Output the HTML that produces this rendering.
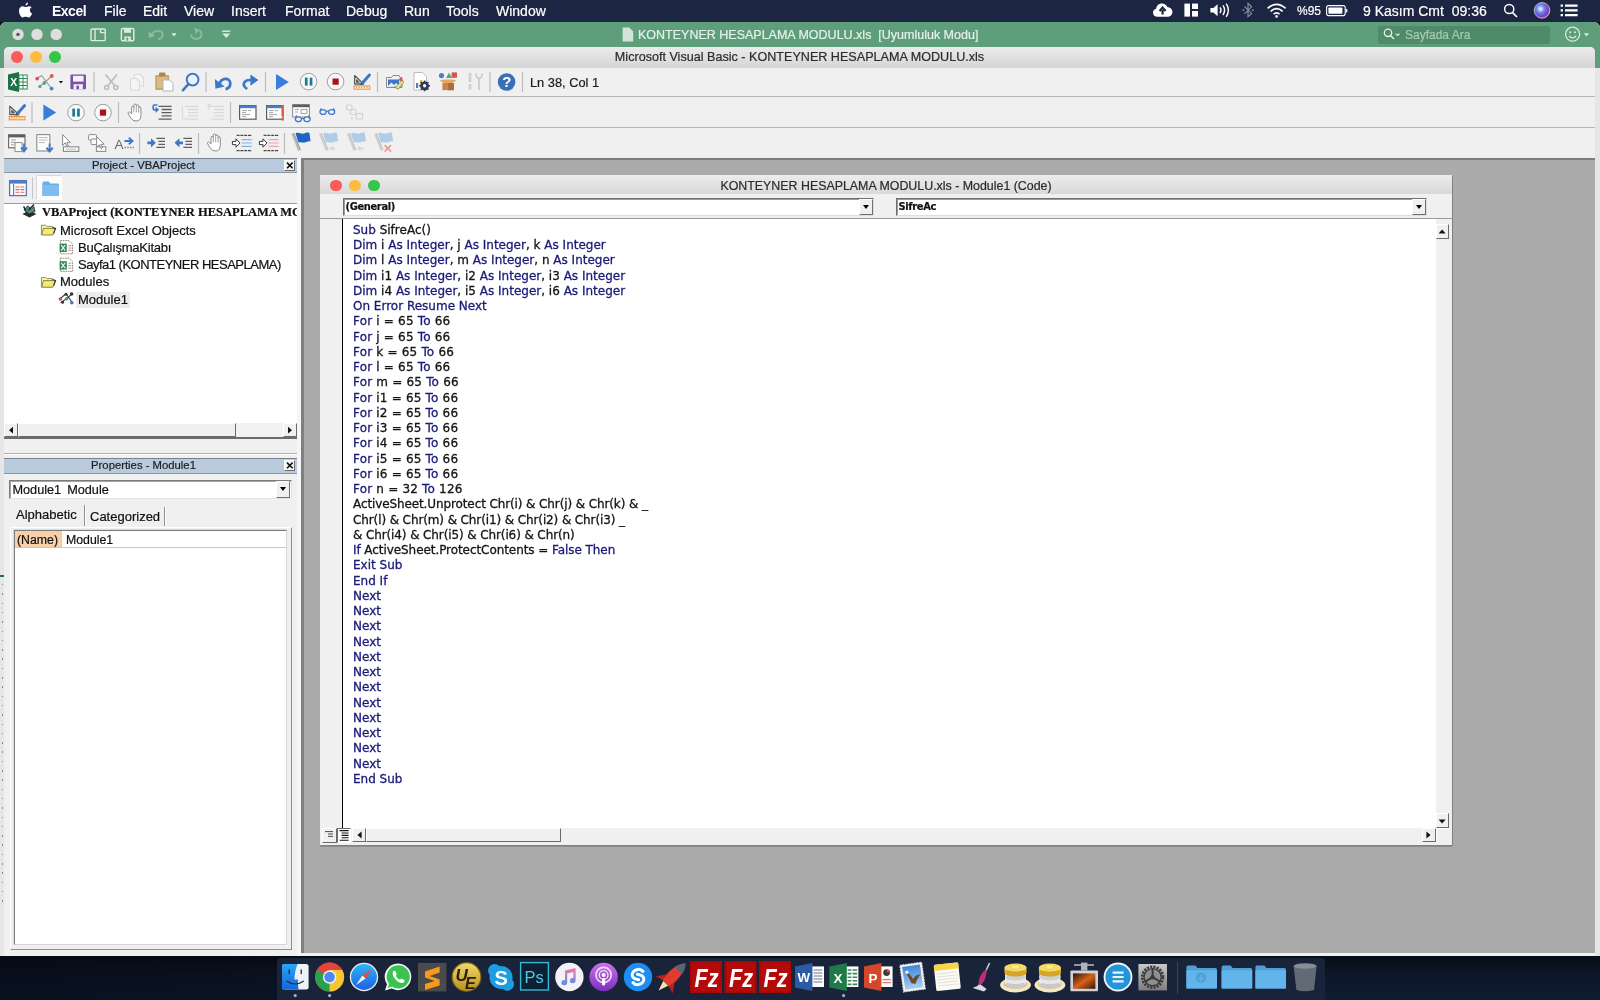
<!DOCTYPE html>
<html lang="tr">
<head>
<meta charset="utf-8">
<title>Microsoft Visual Basic - KONTEYNER HESAPLAMA MODULU.xls</title>
<style>
*{box-sizing:border-box;margin:0;padding:0}
html,body{width:1600px;height:1000px;overflow:hidden;background:#0d1a2c}
body{-webkit-text-stroke:.2px;position:relative;font-family:"Liberation Sans",sans-serif;font-size:13px;color:#1e1e1e}
#root{position:absolute;left:0;top:0;width:1600px;height:1000px;will-change:transform;background:linear-gradient(90deg,rgba(5,7,16,.55),rgba(5,7,16,0) 65%),linear-gradient(#0a1220 0,#0a1220 955px,#070d19 957px,#0c1829 975px,#0f1d32 1000px)}
.abs{position:absolute}
svg{position:absolute;left:0;top:0;overflow:visible}
svg text{font-family:"Liberation Sans",sans-serif}
/* ---------- mac menu bar ---------- */
#menubar{position:absolute;left:0;top:0;width:1600px;height:22px;background:#1c2541;color:#fff;font-size:14px}
#menubar span{position:absolute;top:2px;line-height:18px;white-space:nowrap}
/* ---------- excel window (behind) ---------- */
#xl{position:absolute;left:0;top:22px;width:1600px;height:934px;background:#e6e6e6;border-radius:6px 6px 0 0;overflow:hidden}
#xltitle{position:absolute;left:0;top:0;width:1600px;height:46px;background:#5f9e7a}
#xltitle .t{position:absolute;top:5px;left:638px;font-size:12.5px;color:#e6f1ea;white-space:nowrap;line-height:16px}
#xlsearch{position:absolute;left:1378px;top:4px;width:172px;height:18px;border-radius:3px;background:#4f8a69;color:#a5cbb4;font-size:12px;line-height:18px;padding-left:27px}
/* ---------- VB window ---------- */
#vb{position:absolute;left:4px;top:47px;width:1591px;height:909px;background:#f0f0f0;border-radius:5px 5px 0 0;overflow:hidden}
#vbtitle{position:absolute;left:0;top:0;width:100%;height:21px;background:linear-gradient(#ebebeb,#d5d5d5)}
#vbtitle .t{position:absolute;left:0;width:100%;text-align:center;top:3px;font-size:12.6px;color:#2b2b2b;line-height:15px}
.tl{position:absolute;width:12px;height:12px;border-radius:50%}
.tbsep{position:absolute;left:4px;width:1591px;height:1px;background:#b4b4b4}
#mdi{position:absolute;left:301px;top:158px;width:1294px;height:795px;background:#ababab;border-top:2px solid #7d7d7d;border-left:3px solid #7f7f7f}
/* ---------- panels ---------- */
.ptitle{position:absolute;left:4px;width:293px;padding-right:14px;height:15px;background:#b8cadc;border-top:1px solid #76828f;border-bottom:1px solid #8797a8;font-size:11.3px;text-align:center;line-height:13px;color:#1c1c1c}
.pclose{position:absolute;width:11px;height:11px;background:#f3f3f3;border:1px solid #fff;border-right-color:#6e6e6e;border-bottom-color:#6e6e6e}
.btn3d{position:absolute;background:#f0f0f0;border:1px solid #fff;border-right-color:#6a6a6a;border-bottom-color:#6a6a6a}
.tree{position:absolute;white-space:nowrap;font-size:13px;line-height:16px;color:#111}
/* ---------- code window ---------- */
#cw{position:absolute;left:320px;top:175px;width:1132px;height:670px;background:#f0f0f0;box-shadow:1px 1px 0 #808080,0 2px 0 #8c8c8c}
#cwtitle{position:absolute;left:0;top:0;width:100%;height:19px;background:linear-gradient(#ececec,#d9d9d9)}
#cwtitle .t{position:absolute;left:0;width:100%;text-align:center;top:4px;font-size:12.4px;color:#2b2b2b;line-height:15px;padding-left:0}
.combo{position:absolute;height:18px;background:#fff;border:1px solid #6f6f6f;border-right-color:#dedede;border-bottom-color:#dedede;box-shadow:inset 1px 1px 0 #9c9c9c;font:bold 11px "DejaVu Sans Condensed","DejaVu Sans","Liberation Sans",sans-serif;line-height:15px;padding-left:1.5px;letter-spacing:-.35px;color:#111}
.cbtn{position:absolute;width:14px;height:16px;background:#f0f0f0;border:1px solid #fff;border-right-color:#6f6f6f;border-bottom-color:#6f6f6f}
.cbtn:after{content:"";position:absolute;left:2.5px;top:5px;border:3.5px solid transparent;border-top:4px solid #000;border-bottom:0}
#code{position:absolute;left:22px;top:44px;width:1094px;height:609px;background:#fff;border-left:1px solid #000}
#code pre{-webkit-text-stroke:.3px;position:absolute;left:10px;top:3.75px;font-family:"DejaVu Sans","Liberation Sans",sans-serif;font-size:12px;line-height:15.25px;color:#141414;white-space:pre}
#code pre .w{letter-spacing:.19px}
#code pre .n{letter-spacing:-.11px}
#code pre .n2{letter-spacing:-.07px}
#code pre b{font-weight:normal;color:#1a1a78}
</style>
</head>
<body>
<div id="root">
<!-- MENUBAR -->
<div id="menubar">
<span style="left:52px;font-weight:bold;letter-spacing:-.5px;-webkit-text-stroke:0">Excel</span>
<span style="left:104px">File</span>
<span style="left:143px">Edit</span>
<span style="left:184px">View</span>
<span style="left:231px">Insert</span>
<span style="left:285px">Format</span>
<span style="left:346px">Debug</span>
<span style="left:404px">Run</span>
<span style="left:446px">Tools</span>
<span style="left:496px">Window</span>
<span style="left:1297px;font-size:12px">%95</span>
<span style="left:1363px">9 Kasım Cmt&nbsp; 09:36</span>
</div>
<!-- MENUBAR + EXCEL TITLE ICONS -->
<svg width="1600" height="70" viewBox="0 0 1600 70" style="z-index:2">
<!-- apple -->
<path d="M29.200 6.200 C27.800 6.200 26.600 7.100 25.800 7.100 C25 7.100 23.900 6.300 22.700 6.300 C20.900 6.300 19 7.800 19 10.900 C19 13.800 21.100 17.500 22.700 17.500 C23.600 17.500 24.300 16.800 25.700 16.800 C27.100 16.800 27.500 17.500 28.600 17.500 C30.100 17.500 31.600 14.800 32.100 13.400 C30.600 12.800 29.900 11.500 29.900 10.200 C29.900 8.900 30.600 7.800 31.700 7.200 C31 6.500 30.100 6.200 29.200 6.200 Z M28 2.600 C28.100 3.900 27 5.500 25.500 5.600 C25.300 4.200 26.600 2.800 28 2.600 Z" fill="#fff"/>
<!-- cloud upload -->
<path d="M1157.500 16.800 C1154.800 16.800 1153 15 1153 12.700 C1153 10.700 1154.400 9.200 1156.200 8.800 C1156.400 5.600 1158.800 3.400 1161.900 3.400 C1164.400 3.400 1166.400 4.800 1167.300 6.900 C1170.200 7 1172.400 9.100 1172.400 11.900 C1172.400 14.700 1170.200 16.800 1167.400 16.800 Z" fill="#fff"/><path d="M1162.600 14.600v-4.600 M1159.600 11 L1162.600 7.600 L1165.600 11" fill="none" stroke="#1c2541" stroke-width="2.200"/>
<!-- layout -->
<rect x="1184.400" y="3.600" width="5.600" height="13" fill="#fff"/><rect x="1192" y="3.600" width="6" height="5.400" fill="#fff"/><rect x="1192" y="11" width="6" height="5.600" fill="#fff"/>
<!-- volume -->
<path d="M1210.400 8h3l4.200-3.800v12l-4.200-3.800h-3z" fill="#fff"/><path d="M1220 7.400 Q1222 10.200 1220 13 M1223 5.400 Q1226.200 10.200 1223 15 M1226.200 3.600 Q1230.600 10.200 1226.200 16.800" fill="none" stroke="#fff" stroke-width="1.400"/>
<!-- bluetooth dim -->
<path d="M1244.400 6.400 L1251.600 13.400 L1248 16.800 L1248 3.400 L1251.600 6.800 L1244.400 13.800" fill="none" stroke="#8d93a3" stroke-width="1.100"/><circle cx="1243.400" cy="10.200" r=".9" fill="#8d93a3"/><circle cx="1252.800" cy="10.200" r=".9" fill="#8d93a3"/>
<!-- wifi -->
<g fill="none" stroke="#fff" stroke-width="1.700"><path d="M1267.600 8.400 Q1276.600 0.400 1285.600 8.400"/><path d="M1270.600 11.400 Q1276.600 6 1282.600 11.400"/><path d="M1273.600 14.200 Q1276.600 11.600 1279.600 14.200"/></g><circle cx="1276.600" cy="16.400" r="1.300" fill="#fff"/>
<!-- battery -->
<rect x="1326.600" y="5.600" width="18.600" height="10" rx="2" fill="none" stroke="#fff" stroke-width="1.100"/><rect x="1328.400" y="7.400" width="14" height="6.400" rx=".8" fill="#fff"/><path d="M1346.600 9v3.400" stroke="#fff" stroke-width="1.400"/>
<!-- search -->
<circle cx="1509.200" cy="9" r="4.600" fill="none" stroke="#fff" stroke-width="1.500"/><path d="M1512.600 12.600 L1517 17" stroke="#fff" stroke-width="1.700"/>
<!-- siri -->
<defs><radialGradient id="siri" cx=".4" cy=".4" r=".7"><stop offset="0" stop-color="#fff"/><stop offset=".35" stop-color="#6a8cf0"/><stop offset=".7" stop-color="#7a3bc4"/><stop offset="1" stop-color="#e0558d"/></radialGradient></defs>
<circle cx="1542" cy="10.400" r="7.800" fill="url(#siri)" stroke="#d9c6ea" stroke-width=".8"/>
<!-- list -->
<path d="M1565 5.600h12.600M1565 10.400h12.600M1565 15.200h12.600" stroke="#fff" stroke-width="2.200"/><path d="M1560.600 5.600h2.400M1560.600 10.400h2.400M1560.600 15.200h2.400" stroke="#fff" stroke-width="2.200"/>
<!-- excel traffic lights -->
<circle cx="18" cy="34.400" r="5.700" fill="#dedede"/><circle cx="18" cy="34.400" r="1.700" fill="#5e4a55"/><circle cx="37" cy="34.400" r="5.700" fill="#dedede"/><circle cx="56.200" cy="34.400" r="5.700" fill="#dedede"/>
<!-- excel qat icons -->
<g fill="none" stroke="#dcebe1" stroke-width="1.400"><rect x="91" y="29" width="14.200" height="11.600" rx="1.200"/><path d="M95 29v11.600 M100.600 29.200v3.400h4.200"/></g>
<rect x="121.400" y="28.600" width="12.400" height="12.200" rx="1.400" fill="none" stroke="#dcebe1" stroke-width="1.500"/><rect x="124" y="28.800" width="7" height="4" fill="#dcebe1"/><rect x="124.400" y="36.400" width="6.400" height="4.400" fill="#dcebe1"/><rect x="126.400" y="37.600" width="1.800" height="3" fill="#5f9e7a"/>
<g fill="none" stroke="#8cbba0" stroke-width="1.800"><path d="M152 35 C153 29.600 162.400 29.400 162.600 34.600 C162.800 37.400 160.600 38.800 158 39.200"/><path d="M190.800 34.400 C190.400 39.800 200.600 40.600 201.400 35 C201.800 32.400 200.400 30.600 198.400 30"/></g><path d="M148.400 31 L149 38 L155 36 Z" fill="#8cbba0"/><path d="M194.400 27.400 L199.600 30 L195.600 34 Z" fill="#8cbba0"/>
<path d="M171.400 33.200h5.200l-2.600 3.200z" fill="#dcebe1"/>
<path d="M222.200 31.200h8.200" stroke="#dcebe1" stroke-width="1.400"/><path d="M222.200 33.600h8.200l-4.100 4.400z" fill="#dcebe1"/>
<!-- doc icon -->
<path d="M622.600 27.600h6.800l3.800 3.800v10h-10.600z" fill="#cfe3d7"/>
<!-- search icon in box -->
<circle cx="1388" cy="32.800" r="3.700" fill="none" stroke="#e6f1ea" stroke-width="1.300"/><path d="M1390.600 35.600 L1394 39" stroke="#e6f1ea" stroke-width="1.400"/><path d="M1395.600 33.600 L1397.600 35.400 L1399.600 33.600" fill="none" stroke="#e6f1ea" stroke-width="1.100"/>
<!-- smiley -->
<circle cx="1572.600" cy="34.200" r="7" fill="none" stroke="#dcebe1" stroke-width="1.300"/><circle cx="1570.200" cy="32.200" r="1" fill="#dcebe1"/><circle cx="1575" cy="32.200" r="1" fill="#dcebe1"/><path d="M1569 36 Q1572.600 39.800 1576.200 36" fill="none" stroke="#dcebe1" stroke-width="1.200"/><path d="M1584 33.200h5l-2.500 3.200z" fill="#dcebe1"/>
</svg>
<!-- EXCEL WINDOW BEHIND -->
<div id="xl">
<div id="xltitle"><div class="t">KONTEYNER HESAPLAMA MODULU.xls&nbsp; [Uyumluluk Modu]</div>
<div id="xlsearch">Sayfada Ara</div>
</div>
<div class="abs" style="left:0;top:553px;width:4px;height:2px;background:#2f6b4f"></div>
<div class="abs" style="left:2px;top:562px;width:1px;height:322px;background:repeating-linear-gradient(#8a8a8a 0,#8a8a8a 1.5px,transparent 1.5px,transparent 9.3px)"></div>
</div>
<!-- VB WINDOW -->
<div id="vb">
<div id="vbtitle"><div class="t">Microsoft Visual Basic - KONTEYNER HESAPLAMA MODULU.xls</div>
<div class="tl" style="left:7px;top:4px;background:#fc5b57"></div>
<div class="tl" style="left:26px;top:4px;background:#fdbc40"></div>
<div class="tl" style="left:45px;top:4px;background:#33c748"></div>
</div>
</div>
<div class="tbsep" style="top:96px"></div>
<div class="tbsep" style="top:127px"></div>
<div id="mdi"></div>
<div class="abs" style="left:530px;top:75.3px;font-size:12.8px;line-height:15px;color:#1a1a1a;white-space:nowrap">Ln 38, Col 1</div>
<!-- TOOLBAR ICONS -->
<svg width="1600" height="1000" viewBox="0 0 1600 1000" style="z-index:3">
<defs>
<g id="i-design"><path d="M1.6 2.6 L1.6 11 L10.6 11 Z M3.6 7 L3.6 9.2 L6 9.2 Z" fill="none" stroke="#5e5e5e" stroke-width="1.3" stroke-linejoin="round"/><path d="M9 10.4 L16.4 2" stroke="#3f77c6" stroke-width="3" stroke-linecap="round"/><path d="M7.2 12 L8 9.6 L9.8 11.2 Z" fill="#444"/><rect x="1" y="12.9" width="15.8" height="3.3" fill="#fde9cf" stroke="#e8923a" stroke-width="1"/><path d="M3.6 13.4v1.6M6.200 13.400v1.600M8.800 13.400v1.600M11.400 13.400v1.600M14 13.400v1.600" stroke="#e8923a" stroke-width=".9"/></g>
<g id="i-run"><path d="M0 0 L12.8 8 L0 16 Z" fill="#3b7ddb"/></g>
<g id="i-pause"><circle cx="8.6" cy="8.6" r="8.3" fill="#f8f8f8" stroke="#9d9d9d" stroke-width="1"/><rect x="4.9" y="4.6" width="2.7" height="8" fill="#1c7d92"/><rect x="9.7" y="4.6" width="2.7" height="8" fill="#1c7d92"/></g>
<g id="i-stop"><circle cx="8.6" cy="8.6" r="8.3" fill="#f8f8f8" stroke="#9d9d9d" stroke-width="1"/><rect x="5.5" y="5.5" width="6.2" height="6.2" fill="#a5141e"/></g>
<g id="i-hand"><path d="M4.2 10.5 L4.2 4.2 Q4.2 2.8 5.4 2.8 Q6.5 2.8 6.5 4.2 L6.5 2 Q6.5 .6 7.7 .6 Q8.9 .6 8.9 2 L8.9 2.6 Q8.9 1.4 10.1 1.4 Q11.3 1.4 11.3 2.8 L11.3 4.4 Q11.3 3.4 12.4 3.4 Q13.5 3.4 13.5 4.8 L13.5 12 Q13.5 17.6 8.6 17.6 Q5.2 17.6 3.4 14.6 L.9 10.4 Q.3 9.2 1.3 8.6 Q2.3 8.2 3 9.2 Z" fill="#fff" stroke="#8a8a8a" stroke-width="1"/><path d="M6.5 4v5M8.9 2.6v6.4M11.3 4.4v4.8" stroke="#9a9a9a" stroke-width=".9"/></g>
<g id="i-lines"><path d="M0 .7h13M3 3.9h10M3 7.1h10M3 10.3h10M0 13.5h13" stroke-width="1.3"/></g>
<g id="i-win"><rect x=".6" y=".6" width="16.4" height="13.6" fill="#fff" stroke="#5a5a5a" stroke-width="1.2"/><rect x=".6" y=".6" width="16.4" height="2.6" fill="#4a7fc3"/><path d="M3 5.6h5M3 7.6h4M3 9.6h6M3 11.6h4M9 5.6h3M9 9.6h2" stroke="#9a9a9a" stroke-width=".9"/></g>
<g id="i-glasses"><ellipse cx="3.8" cy="4.6" rx="3.1" ry="2.4" fill="#eef4fb" stroke="#3f77c6" stroke-width="1.3"/><ellipse cx="12.4" cy="4.6" rx="3.1" ry="2.4" fill="#eef4fb" stroke="#3f77c6" stroke-width="1.3"/><path d="M6.9 4.2 Q8.1 3.2 9.3 4.2 M.9 3.6 L2 .8 M15.3 3.6 L14.2 .8" fill="none" stroke="#3f77c6" stroke-width="1.2"/></g>
<g id="i-flag"><path d="M1.6 1.5 L8.3 18.5" stroke="#b9b9b9" stroke-width="2.6"/><path d="M1.6 1.5 L8.3 18.5" stroke="#8a8a8a" stroke-width=".8" transform="translate(1.2,-.4)"/></g>
</defs>
<!-- toolbar 1 -->
<g>
<path d="M19 72 L8 74.4 L8 89.6 L19 92 Z" fill="#1e7145"/><rect x="19" y="75" width="8.2" height="14" fill="#fff" stroke="#2f8a57" stroke-width="1"/><path d="M19 78.5h8M19 82h8M19 85.5h8M23 75v14" stroke="#2f8a57" stroke-width="1"/>
<text x="10.2" y="86.2" font-size="10.5" font-weight="bold" fill="#fff">X</text>
<path d="M37 78.5 L41.5 75.5 L51.5 88.5 M38 87 L44.5 83 L52 75.5" fill="none" stroke="#9c9c9c" stroke-width="1.2"/><circle cx="37.2" cy="78.6" r="1.9" fill="#e0564f"/><circle cx="51.8" cy="76" r="1.9" fill="#e0564f"/><circle cx="44.3" cy="83" r="1.9" fill="#4aa6a0"/><circle cx="40" cy="86.5" r="1.6" fill="#4aa6a0"/><circle cx="51.6" cy="88.6" r="1.9" fill="#4a7fc3"/>
<path d="M58.8 81 L63 81 L60.9 83.6 Z" fill="#111"/>
<rect x="70.4" y="74.4" width="15.6" height="14.8" rx="1" fill="#7a53a6"/><rect x="73" y="75.8" width="10.6" height="5.8" fill="#f4effa"/><rect x="73.6" y="84.2" width="9.2" height="5" fill="#f4effa"/><rect x="76.4" y="85.6" width="2.6" height="3.6" fill="#7a53a6"/>
<path d="M94 72v20M206 72v20M265.5 72v20M377.5 72v20M490 72v20M522.5 72v20" stroke="#bcbcbc" stroke-width="1.2"/>
<g fill="none" stroke="#b9b9b9" stroke-width="1.5"><path d="M105.5 74.5 L115 86 M117 74.5 L107.5 86"/><circle cx="106.6" cy="87.6" r="2"/><circle cx="115.8" cy="87.6" r="2"/></g>
<g fill="#f4f4f4" stroke="#dadada" stroke-width="1.1"><path d="M134.5 74.5h6l3 3v8.5h-9z"/><path d="M130.5 78.5h6l3 3v8.5h-9z"/></g>
<rect x="155.2" y="75" width="14" height="15" rx="1" fill="#c9a76c"/><rect x="159" y="72.4" width="6.4" height="4" rx="1" fill="#a4884f"/><rect x="157" y="77" width="10.4" height="11" fill="#d9bc85"/><path d="M163 80h6.5l3.5 3.5v7.5h-10z" fill="#fff" stroke="#b4b4b4" stroke-width="1"/>
<circle cx="192.6" cy="79.6" r="5.9" fill="#ecf3fc" stroke="#3f77c6" stroke-width="2"/><path d="M188.4 84.2 L183 90.2" stroke="#3f77c6" stroke-width="2.6" stroke-linecap="round"/>
<path d="M219.5 84.5 C220.5 77.5 230 76.8 230.3 83.2 C230.5 86.4 228.6 88.2 225.6 89.2" fill="none" stroke="#3b78cb" stroke-width="2.7"/><path d="M214.8 79 L215.4 88.8 L224.6 86.6 Z" fill="#3b78cb"/>
<path d="M252 80.2 C244.5 79 240.6 84.6 247.2 89" fill="none" stroke="#3b78cb" stroke-width="2.7"/><path d="M250.4 74.4 L258.4 80 L250.4 85.8 Z" fill="#3b78cb"/>
<use href="#i-run" x="276" y="74"/>
<use href="#i-pause" x="300" y="73"/>
<use href="#i-stop" x="327" y="73"/>
<use href="#i-design" x="353" y="73"/>
<!-- project explorer -->
<path d="M386.5 77.5h5l1.5-2h6l1 2h2v10h-15.5z" fill="#f2f2f2" stroke="#8a8a8a" stroke-width="1"/><rect x="388" y="79.5" width="11" height="7.5" fill="#3f77c6"/><path d="M388 86 L391.5 82.5 L394 85 L396.5 83 L399 86.5 L388 87 Z" fill="#eaf1fa"/><path d="M395 87.5 L402.5 80 L403.5 82.5 L398.5 89 Z" fill="#f0e28a" stroke="#66863f" stroke-width=".8"/><circle cx="400.6" cy="79.5" r="1.6" fill="#d9534a"/>
<!-- properties -->
<path d="M414 72.5h8.5l4 4v13.5h-12.5z" fill="#fff" stroke="#bdbdbd" stroke-width="1"/><rect x="416" y="83" width="2.2" height="5" fill="#4a7fc3"/><rect x="420" y="80" width="2.2" height="8" fill="#e6b93e"/><circle cx="424.6" cy="85.8" r="4.4" fill="#2e3a5e"/><circle cx="424.6" cy="85.8" r="1.7" fill="#f2f2f2"/><path d="M424.6 80.4v10.8M419.2 85.8h10.8M420.8 82l7.6 7.6M428.4 82l-7.6 7.6" stroke="#2e3a5e" stroke-width="1.5"/><circle cx="424.6" cy="85.8" r="1.7" fill="#f2f2f2"/>
<!-- object browser -->
<circle cx="441.5" cy="75.6" r="2.6" fill="#4a7fc3"/><path d="M446 78 L449 72.6 L452 78 Z" fill="#59a86b"/><rect x="451.6" y="72.4" width="5.4" height="5.4" fill="#d9534a"/><path d="M439.5 80.5 L444 83 L452 83 L456.5 80.5 L452 79.5 L444 79.5Z" fill="#e7a661"/><rect x="442.4" y="83" width="11.6" height="7.2" fill="#c8854f"/><rect x="448.2" y="83" width="5.8" height="7.2" fill="#a96c3d"/>
<!-- tools disabled -->
<g stroke="#cfcfcf" fill="none"><path d="M470 73v9" stroke-width="2.6"/><path d="M470 84v5.5" stroke-width="2.8"/><path d="M476 73.5 C475.6 77 478 78.4 479 78.6 L479 90" stroke-width="2"/><path d="M482 73.5 C482.4 77 480 78.4 479 78.6" stroke-width="2"/></g>
<!-- help -->
<circle cx="506.6" cy="82" r="8.8" fill="#3b70b7"/><text x="502.2" y="87.4" font-size="15" font-weight="bold" fill="#fff">?</text>
</g>
<!-- toolbar 2 -->
<g>
<use href="#i-design" x="8.2" y="103.6"/>
<path d="M32 102v21M118.5 102v21M230.5 102v21" stroke="#bcbcbc" stroke-width="1.2"/>
<use href="#i-run" x="43.4" y="104.6"/>
<use href="#i-pause" x="67.4" y="104"/>
<use href="#i-stop" x="94.4" y="104"/>
<use href="#i-hand" x="127.4" y="103.4"/>
<use href="#i-lines" x="158.6" y="105.6" stroke="#5e5e5e"/><path d="M157.4 105 L154.4 105 Q153.2 105 153.2 106.2 L153.2 108.4 Q153.2 109.8 154.6 109.8 L156 109.8" fill="none" stroke="#3f77c6" stroke-width="1.7"/><path d="M155.6 106.8 L159.2 109.8 L155.6 112.8Z" fill="#3f77c6"/>
<use href="#i-lines" x="185" y="105.6" stroke="#d9d9d9"/><path d="M182.4 105.5v13h2.5" fill="none" stroke="#d4dbe4" stroke-width="1.1"/>
<use href="#i-lines" x="211" y="105.6" stroke="#d9d9d9"/><path d="M209 110.5v-5h2" fill="none" stroke="#d4dbe4" stroke-width="1.1"/><circle cx="209" cy="105.4" r="1.3" fill="none" stroke="#d4dbe4"/>
<use href="#i-win" x="239" y="105"/>
<use href="#i-win" x="266" y="105"/><rect x="281.4" y="105.4" width="2.4" height="11" fill="#e2603c"/><rect x="281.4" y="118" width="2.4" height="2.6" fill="#e2603c"/>
<rect x="292.6" y="104.6" width="16.8" height="12.4" fill="#fafafa" stroke="#8e8e8e" stroke-width="1"/><rect x="292.6" y="104.6" width="16.8" height="2.6" fill="#5e5e5e"/><path d="M295 109.5h4M295 112h3M301 109.5h6v4h-6z" fill="none" stroke="#9a9a9a" stroke-width=".9"/><use href="#i-glasses" x="294.6" y="114.6"/>
<use href="#i-glasses" x="319.2" y="107.4"/>
<g fill="none" stroke="#d2d2d2" stroke-width="1.1"><rect x="346.5" y="105" width="5.5" height="5" rx="1"/><rect x="350.5" y="109.5" width="5.5" height="5" rx="1"/><rect x="356" y="113.5" width="6.5" height="5.5"/><path d="M352 117v3"/></g>
</g>
<!-- toolbar 3 -->
<g>
<rect x="8.6" y="134.8" width="16.4" height="13" fill="#fafafa" stroke="#6e6e6e" stroke-width="1.2"/><rect x="8.6" y="134.8" width="16.4" height="2.6" fill="#5e5e5e"/><path d="M11 140h5M11 142.4h4M11 144.8h3" stroke="#9a9a9a" stroke-width=".9"/><rect x="15" y="142.6" width="7" height="9" fill="#fff" stroke="#8a8a8a" stroke-width="1"/><path d="M24 143.5v7 M21 147.5 L24 151.4 L27 147.5" fill="none" stroke="#3f77c6" stroke-width="1.8"/>
<rect x="36.8" y="134.6" width="13" height="16.4" fill="#fdfdfd" stroke="#8a8a8a" stroke-width="1.1"/><path d="M39 137.5h8.6M39 140h8.6M39 142.5h6" stroke="#b5b5b5" stroke-width=".9"/><path d="M49.6 143.6v7 M46.4 147.6 L49.6 151.6 L52.8 147.6" fill="none" stroke="#3f77c6" stroke-width="1.9"/>
<path d="M62.6 134.6 L62.6 145.4 L65.2 142.8 L67 146.6 L68.4 146 L66.8 142.4 L70.2 142.2 Z" fill="#fff" stroke="#8a8a8a" stroke-width="1"/><rect x="63.4" y="146.8" width="15.4" height="4.6" fill="#fafafa" stroke="#8a8a8a" stroke-width="1.1"/><path d="M66 149.2h10" stroke="#bdbdbd" stroke-width="1"/>
<g fill="#fafafa" stroke="#8a8a8a" stroke-width="1"><rect x="88.6" y="134.6" width="8" height="5.6" rx="1"/><rect x="91" y="139" width="8" height="5.6" rx="1"/><rect x="96.4" y="146.8" width="9.4" height="4.6"/><path d="M96.6 136.6 L96.6 147.4 L99.2 144.8 L101 148.6 L102.4 148 L100.8 144.4 L104.2 144.2 Z" fill="#fff"/></g>
<text x="114.6" y="149.4" font-size="13.5" fill="#6a6a6a">A</text><path d="M124.4 141h7 M128.8 137.8 L132.6 141 L128.8 144.2" fill="none" stroke="#3f77c6" stroke-width="1.8"/><path d="M124.4 147.6h9.6" stroke="#8a8a8a" stroke-width="1.5" stroke-dasharray="1.6 1.2"/>
<path d="M139.5 133v21M198.5 133v21M284.5 133v21" stroke="#bcbcbc" stroke-width="1.2"/>
<path d="M147.4 141.4h3.6v-3.2l4.8 4.6-4.8 4.6v-3.2h-3.6z" fill="#3f77c6"/><path d="M156.4 138.4h8.6M158.4 141.4h6.6M158.4 144.4h6.6M156.4 147.4h8.6" stroke="#5e5e5e" stroke-width="1.3"/>
<path d="M183 141.4h-3.6v-3.2l-4.8 4.6 4.8 4.6v-3.2h3.6z" fill="#3f77c6"/><path d="M183.4 138.4h8.6M185.4 141.4h6.6M185.4 144.4h6.6M183.4 147.4h8.6" stroke="#5e5e5e" stroke-width="1.3"/>
<use href="#i-hand" x="206.8" y="133.4"/>
<g><path d="M236.6 135.4h15.4M236.6 150.6h15.4" stroke="#4a4a4a" stroke-width="1.2" stroke-dasharray="3 .8"/><path d="M241.6 139.6h10M241.6 143h10M241.6 146.4h10" stroke="#7fb2e6" stroke-width="1.2"/><path d="M232.4 141.4h3.6v-2.6l4 4.2-4 4.2v-2.6h-3.6z" fill="#fff" stroke="#3a3a3a" stroke-width="1"/></g>
<g><path d="M263.6 135.4h15.4M263.6 150.6h15.4" stroke="#4a4a4a" stroke-width="1.2" stroke-dasharray="3 .8"/><path d="M268.6 139.6h10M268.6 143h10M268.6 146.4h10" stroke="#f0a6a0" stroke-width="1.2"/><path d="M259.4 141.4h3.6v-2.6l4 4.2-4 4.2v-2.6h-3.6z" fill="#fff" stroke="#3a3a3a" stroke-width="1"/></g>
<use href="#i-flag" x="291" y="132"/><path d="M295.6 133.4 C299 131.6 301.6 135 305.4 133 C306.8 132.4 308.6 132.6 309.4 133 L310.6 141.6 C308 140.4 306 142.8 303 142.6 C301 142.6 300 141.6 298.4 142.6 Z" fill="#1f63c4"/>
<g opacity=".55"><use href="#i-flag" x="318.6" y="132"/><path d="M323.2 133.4 C326.6 131.6 329.2 135 333 133 C334.4 132.4 336.2 132.6 337 133 L338.2 141.6 C335.6 140.4 333.6 142.8 330.6 142.6 C328.6 142.6 327.6 141.6 326 142.6 Z" fill="#7fb0e2"/><path d="M329 147.4h3.4v-2l3 3-3 3v-2H329z" fill="#c4c4c4"/></g>
<g opacity=".55"><use href="#i-flag" x="346.4" y="132"/><path d="M351 133.4 C354.400 131.600 357 135 360.800 133 C362.200 132.400 364 132.600 364.800 133 L366 141.600 C363.400 140.400 361.400 142.800 358.400 142.600 C356.400 142.600 355.400 141.600 353.800 142.600 Z" fill="#7fb0e2"/><path d="M363.600 147.400h-3.400v-2l-3 3 3 3v-2h3.400z" fill="#c4c4c4"/></g>
<g opacity=".55"><use href="#i-flag" x="373.6" y="132"/><path d="M378.200 133.400 C381.600 131.600 384.200 135 388 133 C389.400 132.400 391.200 132.600 392 133 L393.200 141.600 C390.600 140.400 388.600 142.800 385.600 142.600 C383.600 142.600 382.600 141.600 381 142.600 Z" fill="#7fb0e2"/><path d="M384.600 145.200 L391 151.600 M391 145.200 L384.600 151.600" stroke="#e0564f" stroke-width="1.7"/></g>
</g>
</svg>
<!-- LEFT PANELS -->
<div class="abs" style="left:297px;top:158px;width:4px;height:798px;background:#f6f6f6"></div>
<div class="ptitle" style="top:158px">Project - VBAProject</div>
<div class="pclose" style="left:284px;top:160px"></div>
<div class="abs" style="left:36px;top:175px;width:26px;height:25px;background:#fbfbfb;border:1px solid #d9d9d9;border-right-color:#fff;border-bottom-color:#fff"></div>
<div class="abs" style="left:32px;top:177px;width:1px;height:22px;background:#c6c6c6"></div>
<div class="abs" style="left:4px;top:203px;width:293px;height:220px;background:#fff;border-top:1px solid #9a9a9a"></div>
<div class="tree" style="left:42px;top:204px;font-family:'Liberation Serif',serif;font-weight:bold;font-size:12.5px;width:255px;overflow:hidden">VBAProject (KONTEYNER HESAPLAMA MODULU.xls)</div>
<div class="tree" style="left:60px;top:222.5px">Microsoft Excel Objects</div>
<div class="tree" style="left:78px;top:239.8px;letter-spacing:-.25px">BuÇalışmaKitabı</div>
<div class="tree" style="left:78px;top:257.1px;letter-spacing:-.5px">Sayfa1 (KONTEYNER HESAPLAMA)</div>
<div class="tree" style="left:60px;top:274.4px">Modules</div>
<div class="tree" style="left:76px;top:291.5px;background:#ececec;padding:0 2px">Module1</div>
<!-- project h-scrollbar -->
<div class="abs" style="left:4px;top:423px;width:293px;height:14px;background:#f2f2f2"></div>
<div class="btn3d" style="left:4px;top:423px;width:14px;height:14px"></div>
<div class="btn3d" style="left:18px;top:423px;width:218px;height:14px"></div>
<div class="btn3d" style="left:283px;top:423px;width:14px;height:14px"></div>
<div class="abs" style="left:4px;top:437px;width:293px;height:2px;background:#6c6c6c"></div>
<div class="abs" style="left:4px;top:453px;width:293px;height:1px;background:#b2b2b2"></div>
<div class="abs" style="left:4px;top:454px;width:293px;height:1px;background:#fdfdfd"></div>
<!-- properties -->
<div class="ptitle" style="top:458px;height:16px">Properties - Module1</div>
<div class="pclose" style="left:284px;top:460px"></div>
<div class="abs" style="left:9px;top:480px;width:283px;height:19px;background:#fff;border:1px solid #7b7b7b;border-right-color:#e3e3e3;border-bottom-color:#e3e3e3;box-shadow:inset 1px 1px 0 #a5a5a5"></div>
<div class="abs" style="left:12.5px;top:482px;font-size:12.7px;line-height:16px;color:#111;white-space:pre">Module1<span style="padding-left:6px">Module</span></div>
<div class="cbtn" style="left:276px;top:481px;height:17px"></div>
<div class="abs" style="left:16px;top:507px;font-size:13px;line-height:16px;color:#111">Alphabetic</div>
<div class="abs" style="left:84px;top:505px;width:2px;height:21px;background:linear-gradient(90deg,#8f8f8f 50%,#fff 50%)"></div>
<div class="abs" style="left:90px;top:509px;font-size:13px;line-height:16px;color:#111">Categorized</div>
<div class="abs" style="left:164px;top:507px;width:2px;height:19px;background:linear-gradient(90deg,#8f8f8f 50%,#fff 50%)"></div>
<div class="abs" style="left:10px;top:527px;width:282px;height:423px;border:1px solid #fff;border-right-color:#8e8e8e;border-bottom-color:#8e8e8e"></div>
<div class="abs" style="left:14px;top:530px;width:273px;height:415px;background:#fff;border:1px solid #7c7c7c;border-right:1px solid #d6d6d6;border-bottom:1px solid #d6d6d6;box-shadow:-1px -1px 0 #dcdcdc"></div>
<div class="abs" style="left:15px;top:531px;width:46px;height:16px;background:#f8cfa8"></div>
<div class="abs" style="left:61px;top:531px;width:1px;height:16px;background:#cfcfcf"></div>
<div class="abs" style="left:15px;top:547px;width:271px;height:1px;background:#c8c8c8"></div>
<div class="abs" style="left:17px;top:532px;font-size:12.3px;line-height:16px;color:#111">(Name)</div>
<div class="abs" style="left:66px;top:532px;font-size:12.3px;line-height:16px;color:#111">Module1</div>
<!-- PANEL ICONS / SCROLL ARROWS -->
<svg width="1600" height="1000" viewBox="0 0 1600 1000" style="z-index:4">
<!-- close X -->
<path d="M287 162.600 L292.600 168.200 M292.600 162.600 L287 168.200 M287 462.600 L292.600 468.200 M292.600 462.600 L287 468.200" stroke="#111" stroke-width="1.500"/>
<!-- view code icon -->
<rect x="9.600" y="180.600" width="16.800" height="15" fill="#fff" stroke="#5a78b4" stroke-width="1.300"/><rect x="9.600" y="180.600" width="16.800" height="3" fill="#4a7fc3"/><path d="M13.600 184v11.600" stroke="#5a78b4" stroke-width="1.100"/><path d="M15.400 187h4M20.400 187h4M15.400 189.600h4M20.400 189.600h4M15.400 192.200h4M20.400 192.200h4" stroke="#e26060" stroke-width="1.100"/>
<!-- folder toggle -->
<path d="M42.400 183.200 Q42.400 181.600 44 181.600 L48.600 181.600 L50.400 183.400 L57.600 183.400 Q59 183.400 59 184.800 L59 195.800 L42.400 195.800 Z" fill="#6aaee6"/><rect x="42.400" y="185" width="16.600" height="10.800" fill="#7fbcf0"/>
<!-- vbaproject icon -->
<g><path d="M22.400 214 L29 210.600 L36.400 214 L29.600 217.600 Z" fill="#2a2a2a"/><path d="M24 209.800 L28 205.800 L31 209.400 L33.800 206.600 L35 211.600 L29 214 Z" fill="#5b8e6a" stroke="#222" stroke-width=".8"/><path d="M23.600 206.400 L26.400 212 M27.600 211 L34 204.600" stroke="#222" stroke-width="1.400"/><circle cx="27.400" cy="210.400" r="1.500" fill="#3f77c6"/></g>
<!-- folders -->
<g id="fold1"><path d="M41.400 225.200 L41.400 234.600 L52.400 234.600 L52.400 226.400 L47 226.400 L45.800 225.200 Z" fill="#f7f1a6" stroke="#7d7a3f" stroke-width=".8"/><path d="M43.400 228.400 L55.400 228.400 L52.800 235 L41.600 235 Z" fill="#f3ea7a" stroke="#6f6c33" stroke-width=".8"/><path d="M52.600 227.400 L55.600 228.400 L53.600 233.600" fill="none" stroke="#333" stroke-width="1.100"/></g>
<use href="#fold1" y="52.200"/>
<!-- sheet icons -->
<g id="sh1"><path d="M60.400 240.600h8.600l3.600 3.600v9.600h-12.200z" fill="#fff" stroke="#7a7a7a" stroke-width=".9" stroke-dasharray="1.600 .8"/><rect x="59.600" y="243.600" width="7.200" height="8.400" fill="#2f8a57"/><path d="M61.200 245.200 L65.200 250.600 M65.200 245.200 L61.200 250.600" stroke="#e4f3ea" stroke-width="1.200"/><path d="M68.400 245.600h3M68.400 248h3M68.400 250.400h3" stroke="#c06a6a" stroke-width=".8"/></g>
<use href="#sh1" y="17.600"/>
<!-- module icon -->
<g transform="translate(0,1.2)"><path d="M60 297.400 L66 292.600 L72.400 301.600 M60.600 301.400 L66.600 297.600 L72 292.400" fill="none" stroke="#333" stroke-width="1.100"/><circle cx="60.400" cy="297.800" r="1.800" fill="#c94d46"/><circle cx="66.600" cy="297.600" r="1.800" fill="#3d9a92"/><circle cx="71.600" cy="292.800" r="1.800" fill="#333"/><circle cx="71.800" cy="301.600" r="1.800" fill="#3f77c6"/><circle cx="62.600" cy="301" r="1.500" fill="#333"/><circle cx="66" cy="293" r="1.500" fill="#333"/></g>
<!-- scroll arrows: project h-scroll -->
<path d="M13 426.800 L13 433.600 L9 430.200 Z M288 426.800 L288 433.600 L292 430.200 Z" fill="#111"/>
<!-- code window scroll arrows -->
<path d="M1438.600 233.600 L1445.600 233.600 L1442.100 229.600 Z M1438.600 819.400 L1445.600 819.400 L1442.100 823.400 Z" fill="#111"/>
<path d="M361.600 831.600 L361.600 838.600 L357.400 835.100 Z M1426.400 831.600 L1426.400 838.600 L1430.600 835.100 Z" fill="#111"/>
<!-- procedure/full module view buttons -->
<path d="M325 831.600h8M328 834h5M328 836.400h5" stroke="#4a4a4a" stroke-width="1"/>
<path d="M339.600 830.600h9M341.600 833h7M341.600 835.400h7M341.600 837.800h7M339.600 840.200h9" stroke="#111" stroke-width="1.100"/>
</svg>
<!-- CODE WINDOW -->
<div id="cw">
<div id="cwtitle"><div class="t">KONTEYNER HESAPLAMA MODULU.xls - Module1 (Code)</div>
<div class="tl" style="left:10.3px;top:5px;width:11.4px;height:11.4px;background:#fc5b57"></div>
<div class="tl" style="left:29.3px;top:5px;width:11.4px;height:11.4px;background:#fdbc40"></div>
<div class="tl" style="left:48.3px;top:5px;width:11.4px;height:11.4px;background:#33c748"></div>
</div>
<div class="combo" style="left:23px;top:23px;width:531px">(General)<div class="cbtn" style="right:0;top:0"></div></div>
<div class="combo" style="left:576px;top:23px;width:531px">SifreAc<div class="cbtn" style="right:0;top:0"></div></div>
<div class="abs" style="left:0;top:43px;width:100%;height:1px;background:#9a9a9a"></div>
<div id="code"><pre><b>Sub</b> SifreAc()
<b>Dim</b> i <b>As Integer</b>, j <b>As Integer</b>, k <b>As Integer</b>
<b>Dim</b> l <b>As Integer</b>, m <b>As Integer</b>, n <b>As Integer</b>
<b>Dim</b> i1 <b>As Integer</b>, i2 <b>As Integer</b>, i3 <b>As Integer</b>
<b>Dim</b> i4 <b>As Integer</b>, i5 <b>As Integer</b>, i6 <b>As Integer</b>
<b>On Error Resume Next</b>
<span class="w"><b>For</b> i = 65 <b>To</b> 66</span>
<span class="w"><b>For</b> j = 65 <b>To</b> 66</span>
<span class="w"><b>For</b> k = 65 <b>To</b> 66</span>
<span class="w"><b>For</b> l = 65 <b>To</b> 66</span>
<span class="w"><b>For</b> m = 65 <b>To</b> 66</span>
<span class="w"><b>For</b> i1 = 65 <b>To</b> 66</span>
<span class="w"><b>For</b> i2 = 65 <b>To</b> 66</span>
<span class="w"><b>For</b> i3 = 65 <b>To</b> 66</span>
<span class="w"><b>For</b> i4 = 65 <b>To</b> 66</span>
<span class="w"><b>For</b> i5 = 65 <b>To</b> 66</span>
<span class="w"><b>For</b> i6 = 65 <b>To</b> 66</span>
<span class="w"><b>For</b> n = 32 <b>To</b> 126</span>
<span class="n">ActiveSheet.Unprotect Chr(i) &amp; Chr(j) &amp; Chr(k) &amp; _</span>
<span class="n">Chr(l) &amp; Chr(m) &amp; Chr(i1) &amp; Chr(i2) &amp; Chr(i3) _</span>
<span class="n">&amp; Chr(i4) &amp; Chr(i5) &amp; Chr(i6) &amp; Chr(n)</span>
<span class="n2"><b>If</b> ActiveSheet.ProtectContents = <b>False Then</b></span>
<b>Exit Sub</b>
<b>End If</b>
<b>Next</b>
<b>Next</b>
<b>Next</b>
<b>Next</b>
<b>Next</b>
<b>Next</b>
<b>Next</b>
<b>Next</b>
<b>Next</b>
<b>Next</b>
<b>Next</b>
<b>Next</b>
<b>End Sub</b></pre></div>
<!-- v scrollbar -->
<div class="btn3d" style="left:1116px;top:49px;width:13px;height:15px"></div>
<div class="btn3d" style="left:1116px;top:638px;width:13px;height:15px"></div>
<!-- h scrollbar -->
<div class="btn3d" style="left:2px;top:653px;width:15px;height:15px"></div>
<div class="abs" style="left:17px;top:653px;width:14px;height:15px;background:#fff;border:1px solid #6a6a6a;border-right-color:#fff;border-bottom-color:#fff"></div>
<div class="btn3d" style="left:32px;top:653px;width:14px;height:14px"></div>
<div class="btn3d" style="left:46px;top:653px;width:195px;height:14px"></div>
<div class="btn3d" style="left:1102px;top:653px;width:14px;height:14px"></div>
<div class="btn3d" style="left:1116px;top:653px;width:14px;height:14px;border-right-color:#f0f0f0;border-bottom-color:#f0f0f0"></div>
</div>
<!-- DOCK -->
<div class="abs" style="left:277px;top:958px;width:1048px;height:42px;background:#19233a;border-radius:4px 4px 0 0;z-index:5"></div>
<svg width="1600" height="1000" viewBox="0 0 1600 1000" style="z-index:6">
<defs>
<linearGradient id="gFinderL" x1="0" y1="0" x2="0" y2="1"><stop offset="0" stop-color="#2aa6f5"/><stop offset="1" stop-color="#1466d8"/></linearGradient>
<linearGradient id="gSafari" x1="0" y1="0" x2="0" y2="1"><stop offset="0" stop-color="#2fb4f7"/><stop offset="1" stop-color="#1d62e0"/></linearGradient>
<linearGradient id="gUE" x1="0" y1="0" x2="0" y2="1"><stop offset="0" stop-color="#f0d86a"/><stop offset="1" stop-color="#b8921e"/></linearGradient>
<linearGradient id="gPod" x1="0" y1="0" x2="0" y2="1"><stop offset="0" stop-color="#c873ea"/><stop offset="1" stop-color="#7d2fc0"/></linearGradient>
<linearGradient id="gNote" x1="0" y1="0" x2="0" y2="1"><stop offset="0" stop-color="#f37aa0"/><stop offset="1" stop-color="#5a8bf0"/></linearGradient>
<linearGradient id="gSys" x1="0" y1="0" x2="0" y2="1"><stop offset="0" stop-color="#c9c9c9"/><stop offset="1" stop-color="#7e7e7e"/></linearGradient>
<linearGradient id="gGold" x1="0" y1="0" x2="0" y2="1"><stop offset="0" stop-color="#f7de6a"/><stop offset="1" stop-color="#d69a1c"/></linearGradient>
<linearGradient id="gSilver" x1="0" y1="0" x2="1" y2="0"><stop offset="0" stop-color="#f2f2f2"/><stop offset=".5" stop-color="#bdbdbd"/><stop offset="1" stop-color="#ececec"/></linearGradient>
<linearGradient id="gSky" x1="0" y1="0" x2="0" y2="1"><stop offset="0" stop-color="#3f86d8"/><stop offset="1" stop-color="#a9d0f2"/></linearGradient>
<linearGradient id="gFire" x1="0" y1="0" x2="1" y2="1"><stop offset="0" stop-color="#2a1208"/><stop offset=".5" stop-color="#d8621a"/><stop offset="1" stop-color="#3a160a"/></linearGradient>
<g id="fz"><rect x="0" y="0" width="32" height="32" fill="#b50a0a"/><rect x="1" y="1" width="30" height="30" fill="none" stroke="#8a0505" stroke-width="1" stroke-dasharray="1.500 1.500"/><text x="4.500" y="25.500" font-size="25" font-weight="bold" font-style="italic" fill="#fff" textLength="24" lengthAdjust="spacingAndGlyphs">Fz</text></g>
<g id="sequel"><ellipse cx="15.500" cy="23" rx="15.400" ry="7.400" fill="#f3e8c2"/><ellipse cx="15.500" cy="22" rx="12" ry="5" fill="#d9c58a"/><rect x="5" y="14" width="21" height="9" fill="url(#gSilver)"/><ellipse cx="15.500" cy="23" rx="10.500" ry="3.600" fill="#c9c9c9"/><ellipse cx="15.500" cy="18.500" rx="10.500" ry="3.400" fill="#e8e8e8"/><rect x="5" y="9.500" width="21" height="6" fill="url(#gSilver)"/><ellipse cx="15.500" cy="15" rx="10.500" ry="3.400" fill="#d0d0d0"/><rect x="4.500" y="5.500" width="22" height="5.500" fill="url(#gGold)"/><ellipse cx="15.500" cy="11" rx="11" ry="3.600" fill="#d9a425"/><ellipse cx="15.500" cy="5.500" rx="11" ry="4" fill="#f6dc62"/><rect x="11.500" y="2.600" width="8" height="4.600" rx="1" fill="#fbe98e" stroke="#e7bf3c" stroke-width=".7"/></g>
<g id="folder"><path d="M0 2.600 Q0 1 1.600 1 L9 1 L11 3.400 L29 3.400 Q30.600 3.400 30.600 5 L30.600 24 L0 24 Z" fill="#4f9fd6"/><rect x="0" y="5.600" width="30.600" height="18.400" rx="1" fill="#62b4ea"/></g>
</defs>
<!-- finder -->
<rect x="282" y="964" width="26.600" height="25.400" rx="2.500" fill="#eef1f6"/><path d="M282 966.500 Q282 964 284.500 964 L297.600 964 C295.600 969 294.600 974 294.400 979.600 L298 979.600 C297.800 983 298 986.400 298.600 989.400 L284.500 989.400 Q282 989.400 282 986.900 Z" fill="url(#gFinderL)"/><path d="M289.200 970v3.600M301.200 970v3.600" stroke="#1a2a44" stroke-width="1.300" stroke-linecap="round"/><path d="M286.600 981 Q295.200 987 303.800 981" fill="none" stroke="#1a2a44" stroke-width="1.200"/>
<circle cx="295.200" cy="995.600" r="1.600" fill="#a9adb8"/><circle cx="329.600" cy="995.600" r="1.600" fill="#a9adb8"/><circle cx="843.600" cy="995.600" r="1.600" fill="#a9adb8"/>
<!-- chrome -->
<g><circle cx="329.600" cy="977" r="14.600" fill="#e0443a"/><path d="M329.600 977 L317 969.700 A14.600 14.600 0 0 0 329.600 991.600 L336 981 Z" fill="#2aa14f"/><path d="M329.600 977 L329.600 991.600 A14.600 14.600 0 0 0 342.200 969.700 L329.600 969.700 Z" fill="#f6c82f"/><path d="M317 969.700 A14.600 14.600 0 0 1 342.200 969.700 L329.600 969.700 Z" fill="#e0443a"/><circle cx="329.600" cy="977" r="6.700" fill="#f4f4f4"/><circle cx="329.600" cy="977" r="5.300" fill="#4a8af0"/></g>
<!-- safari -->
<circle cx="364" cy="977" r="14.200" fill="#e9edf2"/><circle cx="364" cy="977" r="12.900" fill="url(#gSafari)"/><path d="M372 969 L365.600 978.600 L362.400 975.400 Z" fill="#f0483e"/><path d="M356 985 L365.600 978.600 L362.400 975.400 Z" fill="#f4f4f4"/>
<!-- whatsapp -->
<path d="M398.400 963.400 A13.400 13.400 0 1 1 391.600 988.600 L385 990.600 L387 984.200 A13.400 13.400 0 0 1 398.400 963.400 Z" fill="#f4f7f4"/><path d="M398.400 965.200 A11.600 11.600 0 1 1 392 986.600 L387.800 987.900 L389.100 983.800 A11.600 11.600 0 0 1 398.400 965.200 Z" fill="#3cc250"/><path d="M393.600 971 C392 972 392.400 976 395.600 979.400 C398.800 982.800 402.600 983.800 404 982.200 C405 981 404.600 980.200 403.800 979.800 L401.800 978.800 C401 978.400 400.600 979.400 400 979.800 C399 979.800 396 977 395.800 975.600 C396.200 975 397 974.600 396.600 973.800 L395.600 971.600 C395.200 970.800 394.400 970.600 393.600 971 Z" fill="#fff"/>
<!-- sublime -->
<rect x="418" y="963" width="28.400" height="28.400" fill="#4b4b4b"/><path d="M425 971.400 L439.600 966.400 L439.600 972.400 L429.600 976 L439.600 979.400 L439.600 985.600 L425 990 L425 984 L434.600 981 L425 977.600 Z" fill="#f79a1c"/>
<!-- UE -->
<circle cx="466.500" cy="977" r="15" fill="#7a5e12"/><circle cx="466.500" cy="977" r="13.800" fill="url(#gUE)"/><text x="455.500" y="980.500" font-size="17" font-weight="bold" font-style="italic" fill="#2a2008">U</text><text x="465" y="989" font-size="16" font-weight="bold" font-style="italic" fill="#2a2008">E</text>
<!-- skype -->
<circle cx="501" cy="977.400" r="11.500" fill="#1d9de2"/><circle cx="494.600" cy="970.600" r="6.600" fill="#1d9de2"/><circle cx="507.400" cy="984.200" r="6.600" fill="#1d9de2"/><text x="494.400" y="984.600" font-size="20" font-weight="bold" fill="#fff">S</text>
<!-- photoshop -->
<rect x="520.600" y="962.600" width="27.800" height="27.400" fill="#0c2234" stroke="#35b7d6" stroke-width="1.400"/><text x="524.400" y="982.600" font-size="16.500" fill="#4cc9e6">Ps</text>
<!-- itunes -->
<circle cx="569.400" cy="977" r="14.200" fill="#f3f1f6"/><path d="M565 970.600 L575.600 968 L575.600 980.600 A2.900 2.500 0 1 1 573.400 978.200 L573.400 972 L567.200 973.600 L567.200 982.600 A2.900 2.500 0 1 1 565 980.200 Z" fill="url(#gNote)"/>
<!-- podcasts -->
<circle cx="603.600" cy="977" r="14.200" fill="url(#gPod)"/><circle cx="603.600" cy="975" r="7.600" fill="none" stroke="#f3dcfb" stroke-width="1.600"/><circle cx="603.600" cy="975" r="4.400" fill="none" stroke="#f3dcfb" stroke-width="1.400"/><circle cx="603.600" cy="975" r="2" fill="#fff"/><rect x="602" y="978" width="3.200" height="7.600" rx="1.600" fill="#fff"/>
<!-- shazam -->
<circle cx="638" cy="977" r="14.200" fill="#1b8df4"/><path d="M643 971.400 C640 968.200 635.200 969 633 972.200 C631.200 975 632.400 977.800 635.400 978.800 L638.600 979.800" fill="none" stroke="#fff" stroke-width="3" stroke-linecap="round"/><path d="M633 982.600 C636 985.800 640.800 985 643 981.800 C644.800 979 643.600 976.200 640.600 975.200 L637.400 974.200" fill="none" stroke="#fff" stroke-width="3" stroke-linecap="round"/>
<!-- rocket -->
<g transform="rotate(45 672 977)"><path d="M672 958 C678 964 678.600 976 677 986 L667 986 C665.400 976 666 964 672 958 Z" fill="#e23b30"/><path d="M667 978 L660 988 L667.400 986 Z M677 978 L684 988 L676.600 986 Z" fill="#b3261e"/><path d="M672 958 C675 961 676.600 964.400 677.200 968 L666.800 968 C667.400 964.400 669 961 672 958 Z" fill="#5a6570"/><path d="M668.600 986 h6.800 L672 996 Z" fill="#f6e6a6"/></g>
<!-- filezilla -->
<use href="#fz" x="690" y="961"/><use href="#fz" x="724.500" y="961"/><use href="#fz" x="759" y="961"/>
<!-- word -->
<rect x="810" y="966.400" width="14" height="20.600" fill="#fbfbfb"/><path d="M813.600 970h8.600M813.600 973h8.600M813.600 976h8.600M813.600 979h8.600M813.600 982h8.600" stroke="#6a7890" stroke-width="1.100"/><path d="M795 966.600 L812.400 963 L812.400 991 L795 987.600 Z" fill="#2b5aa6"/><text x="797.400" y="982.400" font-size="13" font-weight="bold" fill="#fff" textLength="12.600" lengthAdjust="spacingAndGlyphs">W</text>
<!-- excel -->
<rect x="844.400" y="966.400" width="14" height="20.600" fill="#fbfbfb"/><path d="M847.600 970h9.600M847.600 973.600h9.600M847.600 977.200h9.600M847.600 980.800h9.600M847.600 984.400h9.600" stroke="#3c8a5c" stroke-width="1.600"/><path d="M852 968v18" stroke="#fbfbfb" stroke-width="1.200"/><path d="M829.400 966.600 L846.800 963 L846.800 991 L829.400 987.600 Z" fill="#1f7a47"/><text x="833.400" y="982.600" font-size="13.500" font-weight="bold" fill="#fff">X</text>
<!-- powerpoint -->
<rect x="879" y="966.400" width="13.600" height="20.600" fill="#fbfbfb"/><circle cx="886.600" cy="972.600" r="3.400" fill="#3a3a3a"/><path d="M886.600 972.600 L886.600 969.200 A3.400 3.400 0 0 1 890 972.600 Z" fill="#d9482b"/><path d="M882.400 979.600h8.600M882.400 982.600h8.600" stroke="#d9806c" stroke-width="1.300"/><path d="M864 966.600 L881.400 963 L881.400 991 L864 987.600 Z" fill="#d5472a"/><text x="868.600" y="982.600" font-size="13.500" font-weight="bold" fill="#fff">P</text>
<!-- mail stamp -->
<g transform="rotate(-8 912.600 977)"><rect x="901.600" y="963.600" width="22" height="27" fill="#f4f4f4" stroke="#d9d9d9" stroke-width="1.200" stroke-dasharray="1.600 1.200"/><rect x="903.600" y="965.600" width="18" height="23" fill="url(#gSky)"/><path d="M906.600 971 C910 973 912 976 912.600 979 C915 976 918 975 920.600 975.600 C918 978 916 981 914.600 984 L910.600 983 C909.600 979 908 975 906.600 971 Z" fill="#6b4a2a"/><circle cx="907.600" cy="971.600" r="1.700" fill="#f2f2f2"/></g>
<!-- notes -->
<g transform="rotate(-6 947 977)"><rect x="935" y="963.600" width="24.600" height="26.400" rx="1.500" fill="#fbfaf4"/><path d="M935 965.100 Q935 963.600 936.500 963.600 L958.100 963.600 Q959.600 963.600 959.600 965.100 L959.600 969.600 L935 969.600 Z" fill="#f7d548"/><path d="M937 973h20.600M937 976h20.600M937 979h20.600M937 982h20.600M937 985h20.600" stroke="#dedbd0" stroke-width=".8"/></g>
<!-- cleaner -->
<path d="M989.600 963 L978.600 986" stroke="#c9ced6" stroke-width="1.600"/><path d="M986.600 969 C981 973 977.600 979 979 985.600 C983.600 984 986.600 978 986.600 969 Z" fill="#c02a78"/><path d="M972.600 988 L980.600 984.600 L986.600 989 L984 991.600 Z" fill="#d9dde3"/>
<!-- sequel pro x2 -->
<use href="#sequel" x="1000" y="962"/><use href="#sequel" x="1034.400" y="962"/>
<!-- image tool -->
<rect x="1070.400" y="970.600" width="27.600" height="20.600" rx="1" fill="#cfd3d8"/><rect x="1073" y="973.400" width="22.400" height="15.400" fill="url(#gFire)"/><rect x="1081" y="962.600" width="6.400" height="8" fill="#aeb4bb"/><path d="M1074 965h20" stroke="#aeb4bb" stroke-width="1.600"/>
<!-- blue circle -->
<circle cx="1118" cy="977" r="14.400" fill="#f1f6fa"/><circle cx="1118" cy="977" r="12.600" fill="#2494d8"/><path d="M1112.600 972.600h11M1112.600 977h11M1112.600 981.400h11" stroke="#e9f4fb" stroke-width="2.200"/>
<!-- sys pref -->
<rect x="1138.400" y="964" width="28.600" height="26.400" fill="url(#gSys)"/><circle cx="1152.600" cy="977.200" r="10.400" fill="none" stroke="#3c3c3c" stroke-width="2.600" stroke-dasharray="2.200 1.100"/><circle cx="1152.600" cy="977.200" r="8.600" fill="#8f8f8f" stroke="#3a3a3a" stroke-width="1.400"/><path d="M1152.600 977.200 L1152.600 968.600 M1152.600 977.200 L1160 981.600 M1152.600 977.200 L1145.200 981.600" stroke="#3a3a3a" stroke-width="2"/><circle cx="1152.600" cy="977.200" r="2.200" fill="#3a3a3a"/>
<!-- separator -->
<path d="M1177.600 962v32" stroke="#3d4962" stroke-width="1"/>
<!-- folders -->
<use href="#folder" x="1186.400" y="964.600"/><circle cx="1201" cy="977.600" r="5" fill="#4f9fd6"/><path d="M1201 974.600v5 M1198.600 977.800 L1201 980.400 L1203.400 977.800" fill="none" stroke="#62b4ea" stroke-width="1.400"/>
<use href="#folder" x="1221.600" y="964.600"/><use href="#folder" x="1255.400" y="964.600"/>
<!-- trash -->
<path d="M1293.600 966 L1316.600 966 L1314 990 Q1305 992.600 1296.400 990 Z" fill="#6a727d" opacity=".9"/><ellipse cx="1305.100" cy="966" rx="11.500" ry="2.800" fill="#858d98"/>
</svg>
</div>
</body>
</html>
